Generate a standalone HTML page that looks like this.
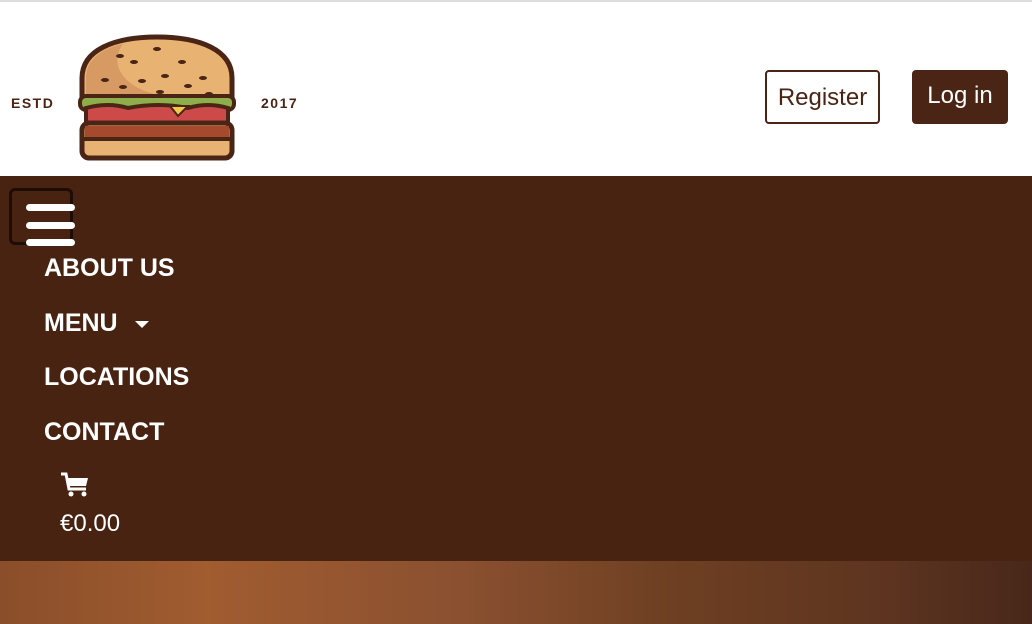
<!DOCTYPE html>
<html><head><meta charset="utf-8"><style>
*{margin:0;padding:0;box-sizing:border-box}
body{width:1032px;height:624px;overflow:hidden;background:#fff;font-family:"Liberation Sans",sans-serif;position:relative}
.top{position:absolute;top:0;left:0;width:1032px;height:2px;background:#ddd}
.estd{position:absolute;top:95px;font:bold 14px "Liberation Sans",sans-serif;color:#4a2515;letter-spacing:1.5px}
.btn{position:absolute;top:70px;height:54px;border-radius:4px;font-size:24px;line-height:52px;text-align:center}
.reg{left:765px;width:115px;border:2px solid #4a2515;color:#4a2515}
.log{left:912px;width:96px;background:#4a2515;color:#fff}
.nav{position:absolute;top:176px;left:0;width:1032px;height:385px;background:#482312}
.ham{position:absolute;left:9px;top:12px;width:64px;height:57px;border:3px solid #1e0d06;border-radius:6px}
.bar{position:absolute;left:26px;width:49px;height:7px;border-radius:4px;background:#fff}
.item{position:absolute;left:44px;color:#fff;font-weight:bold;font-size:25px;letter-spacing:0}
.img{position:absolute;top:561px;left:0;width:1032px;height:63px;background:linear-gradient(90deg,#8a4e2a 0%,#a15c30 20%,#8a5030 45%,#6e3f22 65%,#5e3520 85%,#48271a 100%)}
</style></head><body>
<div class="top"></div>
<div class="estd" style="left:11px">ESTD</div>
<div class="estd" style="left:261px">2017</div>
<svg style="position:absolute;left:78px;top:34px" width="158" height="127" viewBox="0 0 158 127">
<path d="M4 66 L4 44 C4 16 36 3 79 3 C122 3 154 16 154 44 L154 66 Z" fill="#e8b273" stroke="#4a2515" stroke-width="5"/>
<path d="M8 62 L8 44 C8 25 25 14 45 10 C30 30 45 55 85 62Z" fill="#d69a62"/>
<g fill="#4a2515"><ellipse cx="56" cy="28" rx="4" ry="2"/><ellipse cx="79" cy="15" rx="4" ry="2"/><ellipse cx="104" cy="28" rx="4" ry="2"/><ellipse cx="27" cy="46" rx="4" ry="2"/><ellipse cx="64" cy="47" rx="4" ry="2"/><ellipse cx="87" cy="42" rx="4" ry="2"/><ellipse cx="125" cy="44" rx="4" ry="2"/><ellipse cx="110" cy="52" rx="4" ry="2"/><ellipse cx="82" cy="58" rx="4" ry="2"/><ellipse cx="27" cy="62" rx="4" ry="2"/><ellipse cx="45" cy="53" rx="4" ry="2"/><ellipse cx="102" cy="64" rx="4" ry="2"/><ellipse cx="131" cy="60" rx="4" ry="2"/><ellipse cx="42" cy="22" rx="4" ry="2"/></g>
<rect x="2" y="62" width="154" height="14" rx="6" fill="#8dae4a" stroke="#4a2515" stroke-width="4"/>
<path d="M8 74 Q30 68 50 74 Q80 68 110 74 Q130 68 150 74 L150 92 L8 92Z" fill="#cc4a4a" stroke="#4a2515" stroke-width="4"/>
<path d="M92 72 L110 72 L100 82Z" fill="#f1c84b" stroke="#4a2515" stroke-width="2"/>
<rect x="4" y="89" width="150" height="35" rx="7" fill="#e8b273" stroke="#4a2515" stroke-width="5"/>
<rect x="7" y="92" width="144" height="11" fill="#a64a2e"/>
<rect x="4" y="103" width="150" height="4" fill="#4a2515"/>
</svg>
<div class="btn reg">Register</div>
<div class="btn log">Log in</div>
<div class="nav">
<div class="ham"></div>
<div class="bar" style="top:28px"></div><div class="bar" style="top:46px"></div><div class="bar" style="top:63px"></div>
<div class="item" style="top:78px">ABOUT US</div>
<div class="item" style="top:133px">MENU <span style="display:inline-block;width:0;height:0;border-left:7px solid transparent;border-right:7px solid transparent;border-top:7px solid #fff;vertical-align:middle;margin-left:10px"></span></div>
<div class="item" style="top:187px">LOCATIONS</div>
<div class="item" style="top:242px">CONTACT</div>
<svg style="position:absolute;left:60px;top:296px" width="30" height="26" viewBox="0 0 30 26"><path d="M1 2 H6 L9 17 H26" fill="none" stroke="#fff" stroke-width="3"/><path d="M7 6 H28 L26 14 H9Z" fill="#fff"/><circle cx="11" cy="22" r="2.5" fill="#fff"/><circle cx="24" cy="22" r="2.5" fill="#fff"/></svg>
<div style="position:absolute;left:60px;top:334px;color:#fff;font-size:24px">€0.00</div>
</div>
<div class="img"></div>
</body></html>
